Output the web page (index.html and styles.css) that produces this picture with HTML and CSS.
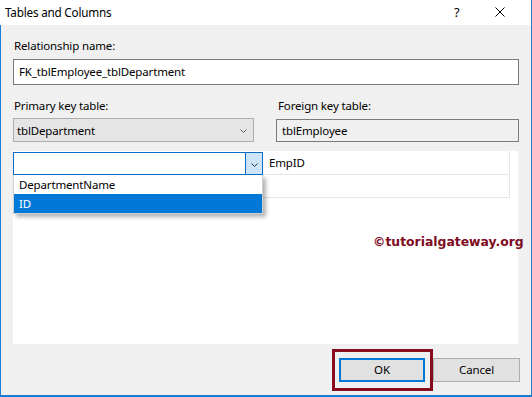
FILE: index.html
```html
<!DOCTYPE html>
<html>
<head>
<meta charset="utf-8">
<link rel="stylesheet" href="styles.css">
</head>
<body>
<div class="dialog">
  <div class="titlebar">
    <span class="title">Tables and Columns</span>
    <span class="help">?</span>
    <span class="close"><svg width="10" height="10" viewBox="0 0 10 10"><path d="M0.5 0.5 L9.5 9.5 M9.5 0.5 L0.5 9.5" stroke="#000" stroke-width="1" fill="none"/></svg></span>
  </div>
  <div class="body">
    <div class="label">Relationship name:</div>
    <div class="textbox">FK_tblEmployee_tblDepartment</div>
    <div class="tables">
      <div class="col">
        <div class="label">Primary key table:</div>
        <div class="combo"><span>tblDepartment</span><svg class="chev" width="7" height="4" viewBox="0 0 7 4"><path d="M0.5 0.5 L3.5 3.5 L6.5 0.5" stroke="#606060" fill="none"/></svg></div>
      </div>
      <div class="col">
        <div class="label fk">Foreign key table:</div>
        <div class="readonly">tblEmployee</div>
      </div>
    </div>
    <div class="panel">
      <div class="grid">
        <div class="cell c1">
          <div class="gridcombo">
            <span class="gc-text"></span>
            <span class="dropbtn"><svg width="7" height="4" viewBox="0 0 7 4"><path d="M0.5 0.5 L3.5 3.5 L6.5 0.5" stroke="#333" fill="none"/></svg></span>
          </div>
        </div>
        <div class="cell c2">EmpID</div>
        <div class="cell c1 r2"></div>
        <div class="cell c2 r2"></div>
      </div>
      <ul class="droplist">
        <li class="item">DepartmentName</li>
        <li class="item selected">ID</li>
      </ul>
      <div class="watermark">©tutorialgateway.org</div>
    </div>
    <div class="buttons">
      <div class="highlight"><button class="btn primary">OK</button></div>
      <button class="btn">Cancel</button>
    </div>
  </div>
</div>
</body>
</html>
```
FILE: styles.css
```css
* { box-sizing: border-box; }
html, body { margin: 0; padding: 0; background: #fff; }
body { font-family: "Noto Sans", "Liberation Sans", sans-serif; font-size: 11.5px; letter-spacing: -0.15px; color: #000; }

.dialog {
  width: 532px;
  height: 397px;
  border-right: 1px solid #1a7fd4;
  border-bottom: 2px solid #1a7fd4;
  overflow: hidden;
  display: flex;
  flex-direction: column;
}

.titlebar {
  height: 25px;
  flex: none;
  background: #fff;
  display: flex;
  align-items: center;
  padding-left: 5px;
}
.title { flex: 1; line-height: 25px; font-size: 11.7px; letter-spacing: -0.2px; }
.help { width: 10px; margin-right: 31px; font-size: 13px; line-height: 25px; }
.close { width: 10px; height: 10px; margin-right: 26px; margin-top: -1px; display: flex; }

.body {
  flex: 1;
  background: #f0f0f0;
  border-left: 1px solid #1a7fd4;
  padding: 13px 11px 0 12px;
}

.label { height: 16px; line-height: 16px; padding-left: 1px; }
.label.fk { padding-left: 2px; }

.textbox {
  margin-top: 5px;
  height: 26px;
  margin-right: 1px;
  background: #fff;
  border: 1px solid #7a7a7a;
  line-height: 24px;
  padding-left: 5px;
}

.tables {
  margin-top: 13px;
  display: grid;
  grid-template-columns: 241px 1fr;
  column-gap: 22px;
  margin-right: 1px;
}
.combo {
  margin-top: 4px;
  height: 24px;
  background: #e5e5e5;
  border: 1px solid #adadad;
  display: flex;
  align-items: center;
  justify-content: space-between;
  padding: 0 6px 0 3px;
}
.combo .chev { margin-top: 1px; }
.readonly {
  margin-top: 5px;
  height: 23px;
  background: #f0f0f0;
  border: 1px solid #7a7a7a;
  line-height: 21px;
  padding-left: 5px;
}

.panel {
  position: relative;
  margin-top: 9px;
  margin-right: 2px;
  height: 193px;
  background: #fff;
}
.grid {
  display: grid;
  grid-template-columns: 250px 247px;
  grid-template-rows: 24px 23px;
}
.cell.c2 {
  border-right: 1px solid #e6e6e6;
  border-bottom: 1px solid #e6e6e6;
  line-height: 23px;
  padding-left: 6px;
}
.cell.c1.r2 { border-bottom: 1px solid #e6e6e6; }

.gridcombo {
  margin-top: 1px;
  height: 23px;
  background: #fff;
  border: 1px solid #0a6cc4;
  display: flex;
}
.gc-text { flex: 1; }
.dropbtn {
  width: 17px;
  background: #cce4f7;
  border-left: 1px solid #0a6cc4;
  display: flex;
  align-items: center;
  justify-content: center;
  padding-top: 2px;
}

.droplist {
  position: absolute;
  left: 0;
  top: 24px;
  width: 250px;
  margin: 0;
  padding: 0;
  list-style: none;
  background: #fff;
  border: 1px solid #cfcfcf;
  border-top: none;
  box-shadow: 3px 3px 4px rgba(0, 0, 0, 0.3);
}
.item { height: 19px; line-height: 19px; padding-left: 5px; }
.item.selected { background: #0078d7; color: #fff; height: 19px; }

.watermark {
  position: absolute;
  left: 360px;
  top: 84px;
  font-family: "DejaVu Sans", Verdana, sans-serif;
  font-weight: bold;
  font-size: 12.4px;
  letter-spacing: 0;
  line-height: 14px;
  color: #7d0c1f;
  white-space: nowrap;
}

.buttons {
  margin-top: 5px;
  display: flex;
  justify-content: flex-end;
  align-items: flex-start;
}
.highlight {
  border: 3px solid #860d1d;
  padding: 6px 5px 6px 4px;
}
.btn {
  width: 87px;
  height: 24px;
  margin: 0;
  background: #e1e1e1;
  border: 1px solid #adadad;
  font-family: "Noto Sans", "Liberation Sans", sans-serif;
  font-size: 11.5px;
  letter-spacing: -0.15px;
  color: #000;
  padding: 0;
  line-height: 20px;
  margin-top: 9px;
}
.btn.primary {
  width: 86px;
  margin-top: 0;
  border: 2px solid #0078d7;
}
```
